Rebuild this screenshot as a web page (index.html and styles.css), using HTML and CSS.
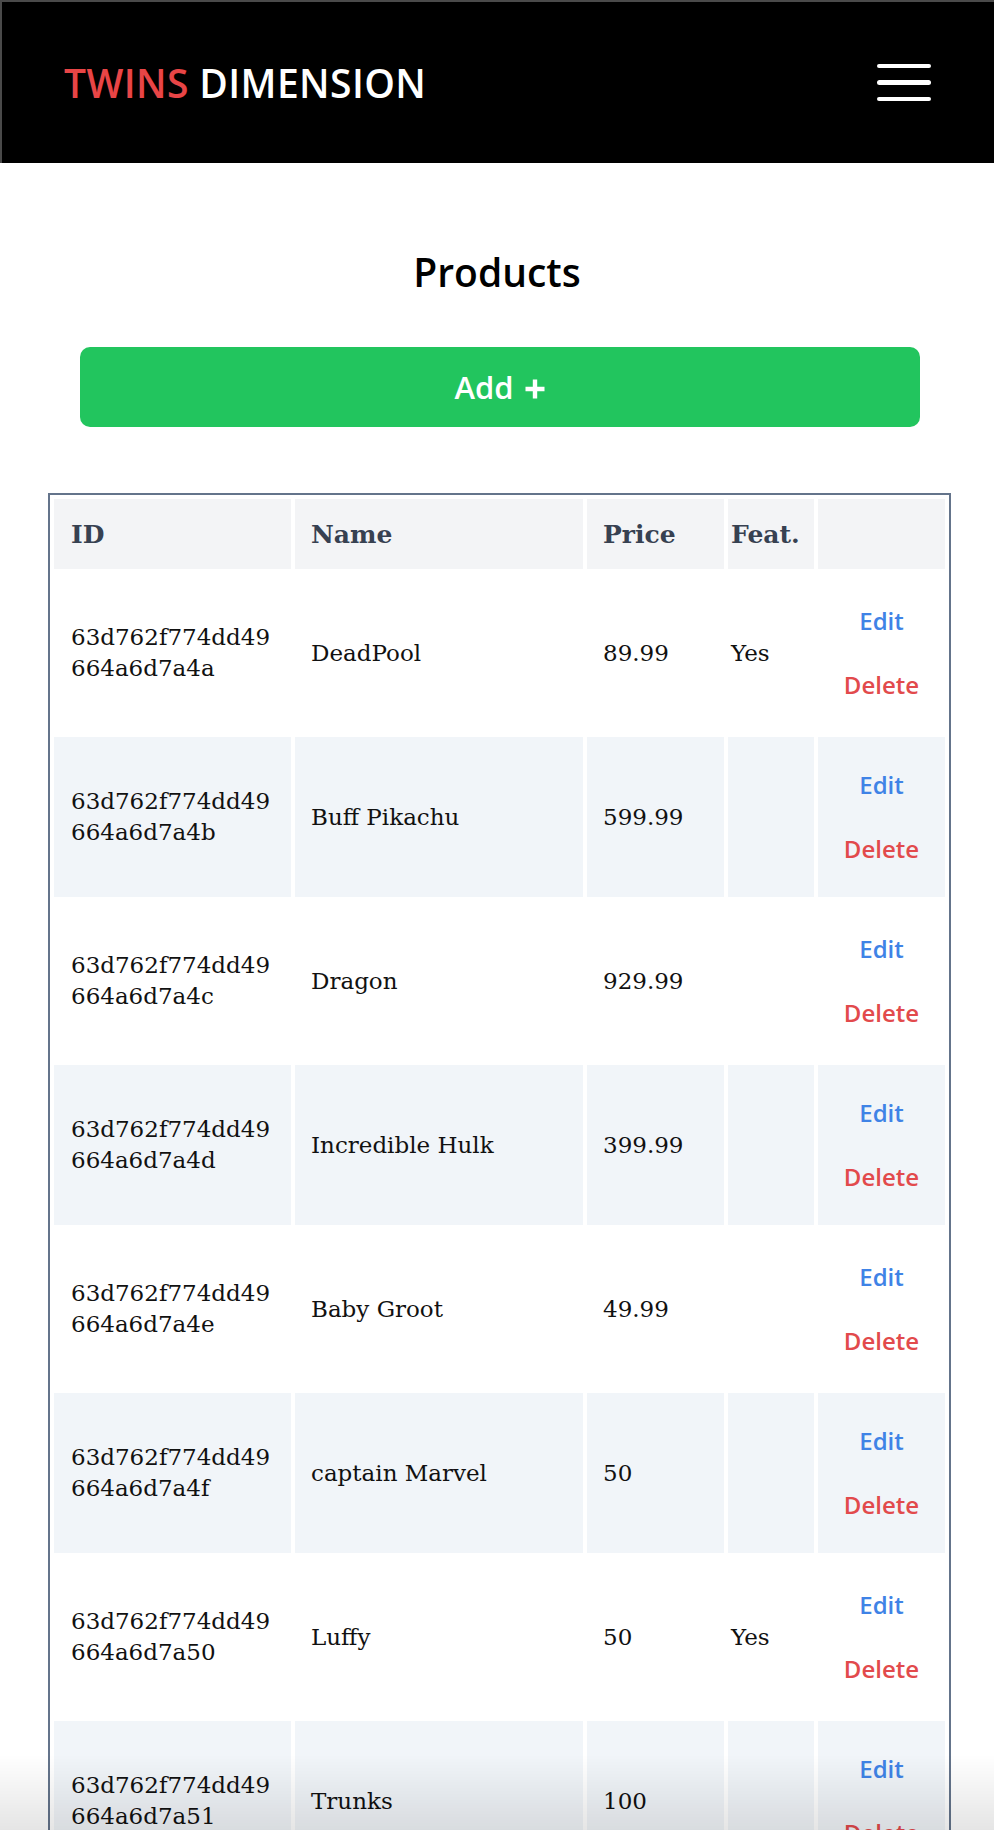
FILE: index.html
```html
<!DOCTYPE html>
<html lang="en">
<head>
<meta charset="utf-8">
<title>Twins Dimension - Products</title>
<link rel="stylesheet" href="styles.css">
</head>
<body>
<header class="topbar">
  <div class="logo"><span class="logo-red">TWINS</span> DIMENSION</div>
  <div class="burger" aria-label="menu">
    <span class="bar"></span><span class="bar"></span><span class="bar"></span>
  </div>
</header>
<main class="page">
  <h1 class="title">Products</h1>
  <div class="add-wrap">
    <button class="add-btn">Add <svg class="plus" viewBox="0 0 22 22" width="22" height="22"><path d="M11 1.5v19M1.5 11h19" stroke="#fff" stroke-width="4.4" fill="none"/></svg></button>
  </div>
  <table class="products">
    <colgroup>
      <col class="c-id"><col class="c-name"><col class="c-price"><col class="c-feat"><col class="c-act">
    </colgroup>
    <thead>
      <tr><th>ID</th><th>Name</th><th>Price</th><th class="feat">Feat.</th><th></th></tr>
    </thead>
    <tbody>
      <tr><td class="id">63d762f774dd49<br>664a6d7a4a</td><td>DeadPool</td><td>89.99</td><td class="feat">Yes</td><td class="act"><div class="actions"><a class="edit">Edit</a><a class="del">Delete</a></div></td></tr>
      <tr><td class="id">63d762f774dd49<br>664a6d7a4b</td><td>Buff Pikachu</td><td>599.99</td><td class="feat"></td><td class="act"><div class="actions"><a class="edit">Edit</a><a class="del">Delete</a></div></td></tr>
      <tr><td class="id">63d762f774dd49<br>664a6d7a4c</td><td>Dragon</td><td>929.99</td><td class="feat"></td><td class="act"><div class="actions"><a class="edit">Edit</a><a class="del">Delete</a></div></td></tr>
      <tr><td class="id">63d762f774dd49<br>664a6d7a4d</td><td>Incredible Hulk</td><td>399.99</td><td class="feat"></td><td class="act"><div class="actions"><a class="edit">Edit</a><a class="del">Delete</a></div></td></tr>
      <tr><td class="id">63d762f774dd49<br>664a6d7a4e</td><td>Baby Groot</td><td>49.99</td><td class="feat"></td><td class="act"><div class="actions"><a class="edit">Edit</a><a class="del">Delete</a></div></td></tr>
      <tr><td class="id">63d762f774dd49<br>664a6d7a4f</td><td>captain Marvel</td><td>50</td><td class="feat"></td><td class="act"><div class="actions"><a class="edit">Edit</a><a class="del">Delete</a></div></td></tr>
      <tr><td class="id">63d762f774dd49<br>664a6d7a50</td><td>Luffy</td><td>50</td><td class="feat">Yes</td><td class="act"><div class="actions"><a class="edit">Edit</a><a class="del">Delete</a></div></td></tr>
      <tr><td class="id">63d762f774dd49<br>664a6d7a51</td><td>Trunks</td><td>100</td><td class="feat"></td><td class="act"><div class="actions"><a class="edit">Edit</a><a class="del">Delete</a></div></td></tr>
    </tbody>
  </table>
</main>
<div class="bottom-shade"></div>
</body>
</html>
```

FILE: styles.css
```css
* { box-sizing: border-box; }
html, body { margin: 0; padding: 0; background: #fff; }
body { font-family: "Open Sans", "Liberation Sans", sans-serif; }

.topbar {
  height: 163px;
  background: #000;
  border-top: 2px solid #4a4a4a;
  border-left: 2px solid #4a4a4a;
  display: flex;
  align-items: center;
  justify-content: space-between;
  padding: 0 63px 0 62px;
}
.logo {
  color: #fff;
  font-family: "Open Sans", sans-serif;
  font-weight: 600;
  font-size: 39px;
  letter-spacing: 0.4px;
  line-height: 1;
  white-space: nowrap;
}
.logo-red { color: #e84546; }
.burger {
  display: flex;
  flex-direction: column;
  gap: 12px;
  width: 54px;
}
.bar {
  display: block;
  height: 4.5px;
  border-radius: 3px;
  background: #fff;
}

.page { padding: 0 0 40px 0; }
.title {
  margin: 85px 0 0 0;
  font-family: "Open Sans", sans-serif;
  font-weight: 600;
  font-size: 39px;
  line-height: 48px;
  text-align: center;
  color: #000;
}
.add-wrap { margin: 51px 74px 0 80px; }
.add-btn {
  width: 100%;
  height: 80px;
  border: none;
  border-radius: 10px;
  background: #22c55e;
  color: #fff;
  font-family: "Open Sans", sans-serif;
  font-weight: 600;
  font-size: 31px;
  display: flex;
  align-items: center;
  justify-content: center;
  gap: 10px;
  padding: 0;
}
.plus { display: block; margin-top: 3px; }

.products {
  margin: 66px 0 0 48px;
  width: 903px;
  table-layout: fixed;
  border-collapse: separate;
  border-spacing: 4px;
  border: 2px solid #64748b;
  font-family: "DejaVu Serif", "Liberation Serif", serif;
}
.c-id { width: 237px; }
.c-name { width: 288px; }
.c-price { width: 137px; }
.c-feat { width: 86px; }
.c-act { width: 127px; }

.products th {
  height: 70px;
  background: #f3f4f6;
  color: #374151;
  font-weight: 700;
  font-size: 25px;
  text-align: left;
  padding: 0 10px 0 16px;
  vertical-align: middle;
}
.products td {
  height: 160px;
  font-size: 23px;
  line-height: 31px;
  color: #111;
  padding: 0 8px 0 16px;
  vertical-align: middle;
}
.products th:first-child, .products td:first-child { padding-left: 17px; }
.products td.id { white-space: nowrap; padding-right: 0; }
.products th.feat, .products td.feat { padding-left: 3px; padding-right: 0; }
.products tbody tr:nth-child(even) td { background: #f1f5f9; }
.products td.act { padding: 0; }

.actions {
  display: flex;
  flex-direction: column;
  align-items: center;
  gap: 32px;
  font-family: "Open Sans", sans-serif;
  font-weight: 600;
  font-size: 24px;
  line-height: 32px;
}
.edit { color: #3f83e6; }
.del { color: #e24a4c; }

.bottom-shade {
  position: fixed;
  left: 0;
  right: 0;
  bottom: 0;
  height: 75px;
  background: linear-gradient(to bottom, rgba(0,0,0,0), rgba(0,0,0,0.10));
  pointer-events: none;
}
```
